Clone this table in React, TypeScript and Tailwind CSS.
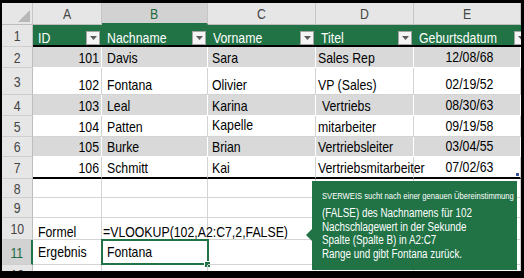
import type { ReactNode } from "react";
import clsx from "clsx";

const GRID = "grid grid-cols-[31px_69px_106px_108px_98px_107px]";
const FONT = "font-['Liberation_Sans',Arial,sans-serif]";
const GREEN = "#217346";

const people = [
  { id: "101", last: "Davis", first: "Sara", title: "Sales Rep", born: "12/08/68", h: "h-[21px]" },
  { id: "102", last: "Fontana", first: "Olivier", title: "VP (Sales)", born: "02/19/52", h: "h-[27px]" },
  { id: "103", last: "Leal", first: "Karina", title: "Vertriebs", born: "08/30/63", h: "h-[21px]" },
  { id: "104", last: "Patten", first: "Kapelle", title: "mitarbeiter", born: "09/19/58", h: "h-[21px]" },
  { id: "105", last: "Burke", first: "Brian", title: "Vertriebsleiter", born: "03/04/55", h: "h-[20px]" },
  { id: "106", last: "Schmitt", first: "Kai", title: "Vertriebsmitarbeiter", born: "07/02/63", h: "h-[22px]" },
];

// the screenshot's text is condensed: squeeze Liberation Sans horizontally
function T({ children, at = "left" }: { children: ReactNode; at?: "left" | "right" | "center" }) {
  return (
    <span
      className={clsx(
        "inline-block scale-x-[0.82] whitespace-nowrap",
        at === "left" && "origin-left",
        at === "right" && "origin-right",
        at === "center" && "origin-center",
      )}
    >
      {children}
    </span>
  );
}

function RowHead({ n, active }: { n: string; active?: boolean }) {
  return (
    <div
      className={clsx(
        "flex items-center justify-center border-b border-b-[#cfcfcf] text-[15px] leading-[15px]",
        active
          ? "border-r-2 border-r-[#217346] bg-[#d2d2d2] text-[#1d6b40]"
          : "border-r border-r-[#bdbdbd] bg-[#e6e6e6] text-[#444]",
      )}
    >
      <T at="center">{n}</T>
    </div>
  );
}

function Cell({ children, className }: { children?: ReactNode; className?: string }) {
  return (
    <div
      className={clsx(
        "relative flex items-end whitespace-nowrap border-r border-b border-[#d4d4d4] text-[15px] leading-[15px] text-black",
        className,
      )}
    >
      {children}
    </div>
  );
}

function FilterButton() {
  return (
    <span className="flex h-[14px] w-[14px] shrink-0 items-center justify-center border border-[#a5a5a5] bg-[#f4f4f4]">
      <svg width="7" height="4" viewBox="0 0 7 4">
        <path d="M0 0H7L3.5 4Z" fill="#5a5a5a" />
      </svg>
    </span>
  );
}

function EmptyRow({ n, h }: { n: string; h: string }) {
  return (
    <div className={clsx(GRID, h)}>
      <RowHead n={n} />
      <Cell />
      <Cell />
      <Cell />
      <Cell />
      <Cell />
    </div>
  );
}

export default function App() {
  return (
    <div className={clsx("h-[278px] w-[524px] bg-black pl-[2px] pt-[3px]", FONT)}>
      <div className="relative h-[268px] w-[519px] overflow-hidden bg-white">
        {/* column letters */}
        <div className={clsx(GRID, "h-[22px]")}>
          <div className="relative border-r border-b border-r-[#c6c6c6] border-b-[#bdbdbd] bg-[#e6e6e6]">
            <svg className="absolute right-[2px] bottom-[2px]" width="12" height="12" viewBox="0 0 12 12">
              <path d="M12 0V12H0Z" fill="#b7b7b7" />
            </svg>
          </div>
          {["A", "B", "C", "D", "E"].map((c) => (
            <div
              key={c}
              className={clsx(
                "flex items-center justify-center border-r border-r-[#c6c6c6] text-[15px] leading-[15px]",
                c === "B"
                  ? "border-b-2 border-b-[#217346] bg-[#d2d2d2] text-[#1d6b40]"
                  : "border-b border-b-[#bdbdbd] bg-[#e6e6e6] text-[#444]",
              )}
            >
              <T at="center">{c}</T>
            </div>
          ))}
        </div>

        {/* table header */}
        <div className={clsx(GRID, "h-[22px]")}>
          <RowHead n="1" />
          {["ID", "Nachname", "Vorname", "Titel", "Geburtsdatum"].map((t) => (
            <div
              key={t}
              className="flex items-end justify-between border-b-2 border-b-black bg-[#217346] pr-[2px] pl-[5px] text-[15px] leading-[15px] text-white"
            >
              <T>{t}</T>
              <FilterButton />
            </div>
          ))}
        </div>

        {/* table rows */}
        {people.map((p, i) => {
          const band = i % 2 === 0;
          const last = i === people.length - 1;
          const cell = clsx(
            band ? "border-r-white border-b-white" : "",
            last && "border-b-2 border-b-black",
          );
          return (
            <div key={p.id} className={clsx(GRID, p.h, band ? "bg-[#d9d9d9]" : "bg-white")}>
              <RowHead n={String(i + 2)} />
              <Cell className={clsx(cell, "justify-end pr-[2px] pb-[2px] text-[#333]")}>
                <T at="right">{p.id}</T>
              </Cell>
              <Cell className={clsx(cell, "pb-[2px] pl-[5px]")}>
                <T>{p.last}</T>
              </Cell>
              <Cell
                className={clsx(
                  cell,
                  "pl-[4px]",
                  p.first === "Kapelle" ? "pb-[4px] text-[12px] leading-[12px]" : "pb-[2px]",
                )}
              >
                <T>{p.first}</T>
              </Cell>
              <Cell className={clsx(cell, "pb-[2px]", p.title === "Vertriebs" ? "pl-[6px]" : "pl-[2px]")}>
                <T>{p.title}</T>
              </Cell>
              <Cell className={clsx(cell, "justify-end pr-[27px] pb-[3px] text-[#404040]")}>
                <T at="right">{p.born}</T>
                {last && <span className="absolute right-[1px] bottom-[1px] h-[3px] w-[3px] bg-[#3a4f9c]" />}
              </Cell>
            </div>
          );
        })}

        <EmptyRow n="8" h="h-[19px]" />
        <EmptyRow n="9" h="h-[20px]" />

        {/* formula row */}
        <div className={clsx(GRID, "h-[22px]")}>
          <RowHead n="10" />
          <Cell className="pl-[5px]">
            <T>Formel</T>
          </Cell>
          <Cell className="pl-px">
            <T>=VLOOKUP(102,A2:C7,2,FALSE)</T>
          </Cell>
          <Cell />
          <Cell />
          <Cell />
        </div>

        {/* result row */}
        <div className={clsx(GRID, "h-[25px]")}>
          <RowHead n="11" active />
          <Cell className="pb-[5px] pl-[5px]">
            <T>Ergebnis</T>
          </Cell>
          <Cell className="pb-[5px] pl-[5px]">
            <T>Fontana</T>
            <span className="absolute -top-px -left-px h-[26px] w-[108px] border-2 border-[#217346]" />
            <span className="absolute -right-[4px] -bottom-[4px] h-[7px] w-[7px] border border-white bg-[#217346]" />
          </Cell>
          <Cell />
          <Cell />
          <Cell />
        </div>

        <EmptyRow n="12" h="h-[20px]" />

        {/* callout */}
        <div
          className="absolute top-[178px] left-[310px] h-[89px] w-[205px] pt-[9px] pl-[10px] text-white"
          style={{ backgroundColor: GREEN }}
        >
          <svg className="absolute top-[48px] -left-[6px]" width="6" height="12" viewBox="0 0 6 12">
            <path d="M6 0L0 6L6 12Z" fill={GREEN} />
          </svg>
          <div className="text-[9.3px] leading-[12px]">
            <T>SVERWEIS sucht nach einer genauen Übereinstimmung</T>
          </div>
          <div className="mt-[5px] flex flex-col items-start text-[12px] leading-[13.5px]">
            <T>(FALSE) des Nachnamens für 102</T>
            <T>Nachschlagewert in der Sekunde</T>
            <T>Spalte (Spalte B) in A2:C7</T>
            <T>Range und gibt Fontana zurück.</T>
          </div>
        </div>
      </div>
    </div>
  );
}
